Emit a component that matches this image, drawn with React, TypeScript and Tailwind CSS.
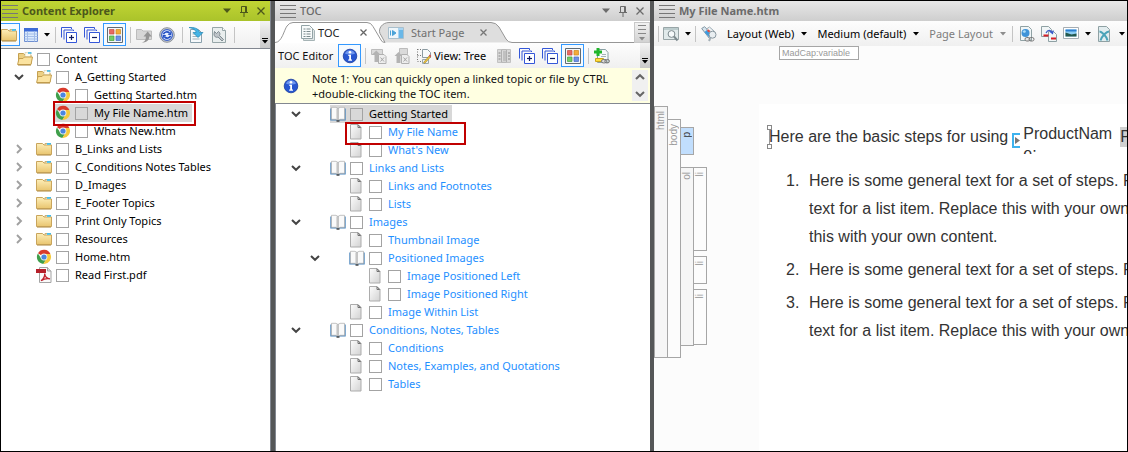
import React from "react";
import type { ReactNode } from "react";

/* ---------- Icons ---------- */

const Svg = ({ children, className = "h-4 w-4" }: { children: ReactNode; className?: string }) => (
  <svg viewBox="0 0 16 16" className={`${className} shrink-0`} aria-hidden="true">
    {children}
  </svg>
);

const FolderIcon = () => (
  <Svg>
    <defs>
      <linearGradient id="fold" x1="0" y1="0" x2="0" y2="1">
        <stop offset="0" stopColor="#fdeeb8" />
        <stop offset="1" stopColor="#e9c56f" />
      </linearGradient>
    </defs>
    <path d="M9 2.500h5.500V5H9z" fill="#fff" stroke="#c9b27a" />
    <path d="M11 2h4v1.200h-4z" fill="#38b6e8" />
    <path d="M.5 13.500v-11h6l1.500 1.500h7.500v9.500z" fill="url(#fold)" stroke="#c9a55c" />
    <path d="M11 2.500h3.500V4H11z" fill="#5cc4ea" />
    <path d="M1 14.200h14" stroke="#b48f45" strokeWidth=".8" />
  </Svg>
);

const OpenFolderIcon = () => (
  <Svg>
    <path d="M1.500 13V2.500h5L8 4h6v9z" fill="#ecd084" stroke="#c5a050" />
    <path d="M8 1.500l6 .4-.5 4H8z" fill="#fffdf0" stroke="#cfc29a" strokeWidth=".6" />
    <path d="M11 1.200h3.500v1.500H11z" fill="#38b6e8" />
    <path d="M.6 13.500L2 7.500h4L7.500 6h8l-1.500 7.500z" fill="#fbe3a0" stroke="#c5a050" />
    <path d="M1 14.200h13" stroke="#b48f45" strokeWidth=".8" />
  </Svg>
);

const ChromeIcon = () => (
  <Svg>
    <path d="M8 8L2 4.200A7 7 0 0 1 14.400 5H8z" fill="#d93a2b" />
    <path d="M1.900 4.400A7 7 0 0 0 7.400 15L10.600 9.700 8 8 5.300 9.600z" fill="#3f9f4b" />
    <path d="M14.300 5A7 7 0 0 1 7.300 15l3.400-5.600L10 5z" fill="#f5ca3d" />
    <circle cx="8" cy="8" r="3.400" fill="#f4f4f4" />
    <circle cx="8" cy="8" r="2.600" fill="#4a86e0" />
  </Svg>
);

const PdfIcon = () => (
  <Svg>
    <path d="M3.500.5h8l3.500 3.500v11.500h-11.500z" fill="#fafafa" stroke="#a4a4a4" />
    <path d="M11.500.5V4H15" fill="#ddd" stroke="#a4a4a4" />
    <path d="M0 2h10v4H0z" fill="#b5202a" />
    <path d="M5 13.800c3-2.300 4-4.500 3.700-7.300.3 3.400 2.100 5 5.300 5.300-3.500-.7-6 0-9 2z" fill="none" stroke="#c1222d" strokeWidth="1.300" />
  </Svg>
);

const BookIcon = () => (
  <Svg>
    <path d="M.3 2.500v12h6.200l1 .8h1l1-.8h6.200v-12z" fill="#4b86bd" />
    <path d="M1.500 1.300H6L8 2.500l2-1.200h4.500v12H10L8 14.500l-2-1.200H1.500z" fill="#fafafa" stroke="#b4b4b4" strokeWidth=".8" />
    <path d="M8 2.500V14" stroke="#8e8e8e" />
    <path d="M6.500 15h3" stroke="#333" strokeWidth="1.300" />
    <path d="M6.500 2.500v10.500" stroke="#dcdcdc" />
  </Svg>
);

const PageIcon = () => (
  <Svg>
    <defs>
      <linearGradient id="page" x1="0" y1="0" x2="1" y2="1">
        <stop offset="0" stopColor="#fdfdfd" />
        <stop offset="1" stopColor="#d2d2d2" />
      </linearGradient>
    </defs>
    <path d="M1.500 .5h7.500l3 3v11.500h-10.500z" fill="url(#page)" stroke="#acacac" />
    <path d="M9 .8v2.700h2.700z" fill="#eee" stroke="#707070" />
  </Svg>
);

const ChevronDown = ({ className = "text-[#444]" }: { className?: string }) => (
  <svg viewBox="0 0 10 8" className={`h-2 w-[10px] ${className}`} aria-hidden="true">
    <path d="M1 2l4 3.800L9 2" fill="none" stroke="currentColor" strokeWidth="2" />
  </svg>
);

const ChevronUp = () => (
  <svg viewBox="0 0 10 8" className="h-2 w-[10px] text-[#666]" aria-hidden="true">
    <path d="M1 6l4-3.800L9 6" fill="none" stroke="currentColor" strokeWidth="2.200" />
  </svg>
);

const ChevronRight = () => (
  <svg viewBox="0 0 10 10" className="h-[10px] w-[10px]" aria-hidden="true">
    <path d="M3 1l4 4-4 4" fill="none" stroke="#a0a0a0" strokeWidth="1.900" />
  </svg>
);

const Caret = ({ className = "text-black" }: { className?: string }) => (
  <svg viewBox="0 0 6 4" className={`h-1 w-[6px] shrink-0 ${className}`} aria-hidden="true">
    <path d="M0 0h6L3 3.500z" fill="currentColor" />
  </svg>
);

const StackIcon = ({ plus = false }: { plus?: boolean }) => (
  <Svg>
    <path d="M.5 10.500V.5h10v1.500" fill="none" stroke="#3457d8" />
    <path d="M3 12.500V3h9.500v1" fill="none" stroke="#3457d8" />
    <path d="M5.500 5.500h10v10h-10z" fill="#fff" stroke="#3457d8" />
    <path d="M8 10.500h5" stroke="#111b60" strokeWidth="1.200" />
    {plus && <path d="M10.500 8v5" stroke="#111b60" strokeWidth="1.200" />}
  </Svg>
);

const GridIcon = () => (
  <Svg>
    <path d="M.5.5h15v15H.5z" fill="#f4f7fa" stroke="#5f6b75" />
    <path d="M2.500 2.500H7V7H2.500z" fill="#e86a62" stroke="#c64a42" strokeWidth=".7" />
    <path d="M9 2.500h4.500V7H9z" fill="#f3ac3a" stroke="#d18a1e" strokeWidth=".7" />
    <path d="M2.500 9H7v4.500H2.500z" fill="#74cc66" stroke="#48a23c" strokeWidth=".7" />
    <path d="M9 9h4.500v4.500H9z" fill="#6f93e6" stroke="#476cc4" strokeWidth=".7" />
  </Svg>
);

const TableIcon = () => (
  <Svg>
    <path d="M1.500 1.500h13v13h-13z" fill="#dbeafc" stroke="#6f8fd0" />
    <path d="M1 1h14v3.500H1z" fill="#3d6bd6" />
    <path d="M1.500 7h13M1.500 9.500h13M1.500 12h13M4.500 4.500v10M11.500 4.500v10" stroke="#a3bdea" />
  </Svg>
);

const FolderUpIcon = () => (
  <Svg>
    <path d="M.5 12.500v-10h5L7 4h8.500v8.500z" fill="#d6d6d6" stroke="#bcbcbc" />
    <path d="M5.500 15.500c3.500-.5 4.500-3 4.300-6H7.500L11.700 4.500 15.800 9.500h-2.600c0 4-2.700 6-7.700 6z" fill="#949494" />
  </Svg>
);

const SyncIcon = () => (
  <Svg>
    <circle cx="8" cy="8" r="7.300" fill="#c5c9cf" stroke="#8d939b" />
    <circle cx="8" cy="8" r="5.400" fill="#e6efff" stroke="#3b62c9" strokeWidth="1.200" />
    <path d="M4.500 7.300C5.200 4.800 8.500 4.200 10.500 6M11.500 8.700c-.7 2.500-4 3.100-6 1.300" fill="none" stroke="#2450c4" strokeWidth="1.700" />
    <path d="M12.200 4.500v3.500H8.700zM3.800 11.500V8h3.500z" fill="#2450c4" />
  </Svg>
);

const DocArrowIcon = () => (
  <Svg>
    <path d="M2.500 2.500h8l3 3v10h-11z" fill="#f6f9fb" stroke="#8aa0ac" />
    <path d="M4.500 7h5M4.500 9.500h7M4.500 12h7" stroke="#a5b2bb" />
    <path d="M1 .5c5-.5 10 1 10.500 5h3.500l-5 5-5-5h3C8 3 5 1.500 1 .5z" fill="#44b4e6" stroke="#2185b4" strokeWidth=".7" />
  </Svg>
);

const DocWrenchIcon = () => (
  <Svg>
    <path d="M1.500.5h10l3 3v12h-13z" fill="#e9eeee" stroke="#97a6a8" />
    <path d="M11.500.5v3h3" fill="#fff" stroke="#97a6a8" />
    <path d="M3.500 4.500l2 2 2-2c1.500 1 1.800 2.500 1 4l4 4-1.500 1.500-4-4C5 11 3 9.500 3 7z" fill="#bfc5c9" stroke="#6c7880" strokeWidth=".8" />
  </Svg>
);

const InfoIcon = () => (
  <Svg>
    <circle cx="8" cy="8" r="6.800" fill="#2756d0" stroke="#1a3b9c" strokeWidth=".8" />
    <path d="M3 5.500a5.500 5.500 0 0 1 10 0C11 7 5 7 3 5.500z" fill="#6d95ee" />
    <circle cx="8" cy="4.300" r="1.300" fill="#fff" />
    <path d="M6.300 6.700H9v4.800h1v1.200H6.200v-1.200h1V8h-.9z" fill="#fff" />
  </Svg>
);

const GrayDocsIcon = ({ twin = false }: { twin?: boolean }) => (
  <Svg>
    <path d={twin ? "M5.500 .5h8v7h-8z" : "M.5 1.500h11v5h-11z"} fill="#dadada" stroke="#bcbcbc" />
    <path d={twin ? "M2.500 15V8H.5l4-4 4 4h-2v7z" : "M3.500 14V7H.8L5.300 2.500 9.800 7H7v7z"} fill="#b3b3b3" />
    <path d="M7.500 6.500h5.500l2 2v7H7.500z" fill="#ededed" stroke="#b0b0b0" />
    <path d="M9.500 9.500l3.500 4M13 9.500l-3.500 4" stroke="#a5a5a5" />
  </Svg>
);

const ViewIcon = () => (
  <Svg>
    <path d="M1.500 1v12M1.500 1.500H6M1.500 7.500H5M1.500 13.500H5" stroke="#777" strokeDasharray="1 1.500" />
    <path d="M6.500 1.500h5l3 3v5h-8z" fill="#f7fafb" stroke="#8c9ba2" />
    <path d="M6.500 11.500h6v4h-6z" fill="#eef2f4" stroke="#9aa8ae" />
    <path d="M7.500 14.500L13 8l1.300 1.300-5.500 6z" fill="#f0c63a" stroke="#8a6c1a" strokeWidth=".5" />
    <path d="M12.800 7.600l1-1 1.500 1.500-1 1z" fill="#d94444" />
  </Svg>
);

const ListIcon = () => (
  <Svg>
    <path d="M1.500 1.500h13v13h-13z" fill="#d9d9d9" stroke="#c2c2c2" />
    <path d="M5.500 2h5v12h-5z" fill="#f8f8f8" stroke="#b0b0b0" />
    <path d="M6.500 4h3.500M6.500 6h3.500M6.500 8h3.500M6.500 10h3.500M6.500 12h3.500M2.500 5h2M2.500 8h2M2.500 11h2M12 5h2M12 8h2M12 11h2" stroke="#888" />
  </Svg>
);

const DocPlusIcon = () => (
  <Svg>
    <path d="M3.500 1.500h8l2.500 3v10h-10.500z" fill="#f7fafa" stroke="#88a0a4" />
    <path d="M8 6.500h4M7 8.500h5" stroke="#a4b4b8" />
    <path d="M2.500 0h3v2.500H8v3H5.500V8h-3V5.500H0v-3h2.500z" fill="#20b52c" />
    <path d="M1.500 10.500h8v3h-8z" fill="#ffdf3d" stroke="#caa51d" />
    <rect x="7.500" y="11.500" width="5" height="3.400" rx="1.700" fill="#ddd" stroke="#777" />
    <rect x="10.800" y="11.500" width="4.600" height="3.400" rx="1.700" fill="none" stroke="#777" />
  </Svg>
);

const TocPageIcon = () => (
  <Svg>
    <path d="M3.500 2.500h8l3 3v10h-11z" fill="#dfe5e6" stroke="#a6b4b6" />
    <path d="M1.500.5h8l3 3v10h-11z" fill="#f8fbfb" stroke="#93a3a6" />
    <path d="M3.500 4h2M6.500 4h4M3.500 6.500h2M6.500 6.500h4M3.500 9h2M6.500 9h4M3.500 11.500h2M6.500 11.500h4" stroke="#7c8b8e" />
  </Svg>
);

const StartPageIcon = () => (
  <Svg>
    <path d="M.5 2.500h15v11H.5z" fill="#a8d4f2" stroke="#a9bfcc" />
    <path d="M1 3h9v10H1z" fill="#eef6fb" />
    <path d="M2.500 5.500v5M4.500 5.500v5L8 8z" fill="#49a2d8" stroke="#49a2d8" />
    <path d="M11 5h4v8h-4z" fill="#6ab8e8" />
  </Svg>
);

const PreviewIcon = () => (
  <Svg>
    <path d="M.5 1.500h15v12H.5z" fill="#e1eaeb" stroke="#98a5a7" />
    <path d="M1 2h14v2H1z" fill="#bccccd" />
    <circle cx="8.500" cy="8" r="3.400" fill="#f6fafb" stroke="#7c898d" />
    <path d="M11 10.500l3.500 4" stroke="#7c898d" strokeWidth="1.900" />
  </Svg>
);

const TagsIcon = () => (
  <Svg>
    <path d="M.7 2.500L3.500 .7 12 9 8.500 12.500z" fill="#d6e4ee" stroke="#8195a2" />
    <path d="M5.500 3l3-2 5 4.500-3 3z" fill="#eef3f5" stroke="#9cacb5" />
    <path d="M3.500 6l2.500-2 4 4.500L8 11z" fill="#3c9be0" />
    <path d="M7 3.200l2.500 1.800-1.500 1.500L6 5z" fill="#e34b42" />
    <circle cx="11.500" cy="8.700" r="3.500" fill="#e9eef1" stroke="#8997a0" />
    <path d="M9.500 11.500L8 15" stroke="#a3afb6" strokeWidth="2" />
  </Svg>
);

const DocGlobeIcon = () => (
  <Svg>
    <path d="M1.500.5h8l3 3v11h-11z" fill="#f1f6f7" stroke="#8fa1a4" />
    <circle cx="6.500" cy="7" r="4" fill="#3e93d8" />
    <path d="M3.500 5.500c2-2.500 4-1 3.200.5-.8 1.500-2.400.8-3.200-.5z" fill="#aadcf8" />
    <rect x="6" y="11.500" width="5" height="3.500" rx="1.700" fill="#e5e5e5" stroke="#777" />
    <rect x="10" y="11.500" width="5" height="3.500" rx="1.700" fill="none" stroke="#777" />
  </Svg>
);

const DocSwapIcon = () => (
  <Svg>
    <path d="M.5.500h7l3 3v7H.5z" fill="#f1f6f7" stroke="#8fa1a4" />
    <path d="M7.500 5.500h5l3 3v7h-8z" fill="#f1f6f7" stroke="#8fa1a4" />
    <path d="M2.500 9.500h5M10 12.500h5" stroke="#d81f26" strokeWidth="2" />
    <path d="M5 7c2-4 5-3 6-.5M9 5.500l2.500 2 .8-3" fill="none" stroke="#3859ca" strokeWidth="1.200" />
  </Svg>
);

const PictureIcon = () => (
  <Svg>
    <path d="M.5 1.500h15v11H.5z" fill="#fff" stroke="#a5adb3" />
    <path d="M2.500 3.500h11v7h-11z" fill="#8ccdf3" />
    <path d="M2.500 3.500h11v2h-11z" fill="#2a7ed0" />
    <path d="M2.500 6.500l6 2 5-1v3h-11z" fill="#24584d" />
  </Svg>
);

const DocCutIcon = () => (
  <Svg>
    <path d="M1.500.5h8l3 3v12h-11z" fill="#e3edef" stroke="#8fa1a4" />
    <path d="M2.500 5.500c2 0 7 4.500 8 9M12 5.500c-2.500 0-7 4.500-8.500 9" fill="none" stroke="#4ba3b8" strokeWidth="2" />
  </Svg>
);

/* ---------- Shared chrome ---------- */

const Grip = () => (
  <span className="flex w-4 shrink-0 flex-col gap-[3px] text-[#777]" aria-hidden="true">
    <span className="h-px bg-current" />
    <span className="h-px bg-current" />
    <span className="h-px bg-current" />
    <span className="h-px bg-current" />
  </span>
);

const PanelButtons = () => (
  <div className="ml-auto flex items-center gap-[7px]">
    <button aria-label="Window options" className="flex h-4 w-[10px] items-center">
      <svg viewBox="0 0 10 6" className="h-[6px] w-[10px]"><path d="M1 .5h8L5 5z" fill="currentColor" /></svg>
    </button>
    <button aria-label="Pin" className="flex h-4 w-[10px] items-center">
      <svg viewBox="0 0 10 12" className="h-3 w-[10px]">
        <path d="M2.500 7V1.500h5V7M6.500 2v5M1 7.500h8M5 8v4" fill="none" stroke="currentColor" />
      </svg>
    </button>
    <button aria-label="Close" className="flex h-4 w-[10px] items-center">
      <svg viewBox="0 0 10 10" className="h-[10px] w-[10px]">
        <path d="M1.500 1.500l7 7M8.500 1.500l-7 7" stroke="currentColor" strokeWidth="1.300" />
      </svg>
    </button>
  </div>
);

const TitleBar = ({ title, green, bold, buttons = true }: { title: string; green?: boolean; bold?: boolean; buttons?: boolean }) => (
  <header
    className={`flex h-5 shrink-0 items-center ${
      green
        ? "gap-1 bg-linear-to-b from-[#c1d534] to-[#aac32a] pl-px pr-1 text-[#4c571b]"
        : "gap-1 bg-linear-to-b from-[#e8e8e8] to-[#cecece] pl-[5px] pr-[5px] text-[#6b6b6b]"
    }`}
  >
    <Grip />
    <h2 className={`whitespace-nowrap leading-5 ${bold ? "font-bold" : "font-medium"}`}>{title}</h2>
    {buttons && <PanelButtons />}
  </header>
);

const Sep = () => <span className="ml-1 mr-px h-4 w-px shrink-0 bg-[#c4c4c4]" />;

const Tool = ({ label, active, children }: { label: string; active?: boolean; children: ReactNode }) => (
  <button
    aria-label={label}
    title={label}
    className={`flex h-[23px] w-[23px] shrink-0 items-center justify-center ${active ? "border border-[#3399ff] bg-[#f5faff]" : ""}`}
  >
    {children}
  </button>
);

const Overflow = () => (
  <button aria-label="More tools" className="ml-auto flex h-full w-[10px] shrink-0 flex-col items-center justify-end gap-px bg-linear-to-b from-[#f4f4f4] to-[#c9c9c9] pb-1">
    <span className="h-px w-[6px] bg-black" />
    <Caret />
  </button>
);

/* ---------- Tree ---------- */

type Kind = "open" | "folder" | "chrome" | "pdf" | "book" | "page";
type Row = {
  text: string;
  kind: Kind;
  level: number;
  arrow?: "down" | "right";
  selected?: boolean;
  frame?: string;
};

const icons: Record<Kind, ReactNode> = {
  open: <OpenFolderIcon />,
  folder: <FolderIcon />,
  chrome: <ChromeIcon />,
  pdf: <PdfIcon />,
  book: <BookIcon />,
  page: <PageIcon />,
};

const Tree = ({ rows, slots, arrowPad, color, name }: { rows: Row[]; slots: string[]; arrowPad: string; color: string; name: string }) => (
  <ul role="tree" aria-label={name}>
    {rows.map((row) => (
      <li key={row.text} role="treeitem" aria-selected={!!row.selected} className="flex h-[18px] items-center">
        <span className={`flex shrink-0 justify-end ${arrowPad} ${slots[row.level]}`}>
          {row.arrow && (
            <button aria-label={row.arrow === "down" ? `Collapse ${row.text}` : `Expand ${row.text}`}>
              {row.arrow === "down" ? <ChevronDown /> : <ChevronRight />}
            </button>
          )}
        </span>
        <label className={`relative flex h-[18px] items-center gap-1 pr-1 ${row.selected ? "bg-[#d8d8d8] text-black" : color}`}>
          {icons[row.kind]}
          <input type="checkbox" className="h-[13px] w-[13px] shrink-0 appearance-none border border-[#a3a3a3] bg-transparent checked:bg-[#666]" />
          <span className="ml-[2px] whitespace-nowrap">{row.text}</span>
          {row.frame && <span className={`pointer-events-none absolute z-10 border-2 border-[#c00000] ${row.frame}`} />}
        </label>
      </li>
    ))}
  </ul>
);

const contentRows: Row[] = [
  { text: "Content", kind: "open", level: 0 },
  { text: "A_Getting Started", kind: "open", level: 1, arrow: "down" },
  { text: "Getting Started.htm", kind: "chrome", level: 2 },
  { text: "My File Name.htm", kind: "chrome", level: 2, selected: true, frame: "-top-[3px] -bottom-1 -left-[2px] -right-1" },
  { text: "Whats New.htm", kind: "chrome", level: 2 },
  { text: "B_Links and Lists", kind: "folder", level: 1, arrow: "right" },
  { text: "C_Conditions Notes Tables", kind: "folder", level: 1, arrow: "right" },
  { text: "D_Images", kind: "folder", level: 1, arrow: "right" },
  { text: "E_Footer Topics", kind: "folder", level: 1, arrow: "right" },
  { text: "Print Only Topics", kind: "folder", level: 1, arrow: "right" },
  { text: "Resources", kind: "folder", level: 1, arrow: "right" },
  { text: "Home.htm", kind: "chrome", level: 1 },
  { text: "Read First.pdf", kind: "pdf", level: 1 },
];

const tocRows: Row[] = [
  { text: "Getting Started", kind: "book", level: 0, arrow: "down", selected: true },
  { text: "My File Name", kind: "page", level: 1, frame: "-top-px -bottom-1 -left-1 -right-1" },
  { text: "What's New", kind: "page", level: 1 },
  { text: "Links and Lists", kind: "book", level: 0, arrow: "down" },
  { text: "Links and Footnotes", kind: "page", level: 1 },
  { text: "Lists", kind: "page", level: 1 },
  { text: "Images", kind: "book", level: 0, arrow: "down" },
  { text: "Thumbnail Image", kind: "page", level: 1 },
  { text: "Positioned Images", kind: "book", level: 1, arrow: "down" },
  { text: "Image Positioned Left", kind: "page", level: 2 },
  { text: "Image Positioned Right", kind: "page", level: 2 },
  { text: "Image Within List", kind: "page", level: 1 },
  { text: "Conditions, Notes, Tables", kind: "book", level: 0, arrow: "down" },
  { text: "Conditions", kind: "page", level: 1 },
  { text: "Notes, Examples, and Quotations", kind: "page", level: 1 },
  { text: "Tables", kind: "page", level: 1 },
];

/* ---------- Panels ---------- */

const ContentExplorer = () => (
  <section className="flex w-[270px] shrink-0 flex-col border-r border-[#828790] bg-white">
    <TitleBar title="Content Explorer" green bold />
    <div className="flex h-[27px] shrink-0 items-center bg-linear-to-b from-[#fdfdfd] to-[#f0f0f0]">
      <button aria-label="Show folders" className="flex h-[23px] w-[19px] shrink-0 items-center border border-l-0 border-[#3399ff] bg-[#f5faff]">
        <FolderIcon />
      </button>
      <button aria-label="View options" className="flex h-[23px] w-[31px] shrink-0 items-center justify-end gap-[5px] pr-px">
        <TableIcon />
        <Caret />
      </button>
      <Sep />
      <Tool label="Expand all"><StackIcon plus /></Tool>
      <Tool label="Collapse all"><StackIcon /></Tool>
      <Tool label="Show indicators" active><GridIcon /></Tool>
      <Sep />
      <Tool label="Up one level"><FolderUpIcon /></Tool>
      <Tool label="Refresh"><SyncIcon /></Tool>
      <Sep />
      <Tool label="Open"><DocArrowIcon /></Tool>
      <Tool label="Properties"><DocWrenchIcon /></Tool>
      <Sep />
      <Overflow />
    </div>
    <div className="grow border-t border-[#828790] pt-px">
      <Tree name="Content Explorer" rows={contentRows} slots={["w-4", "w-[35px]", "w-[54px]"]} arrowPad="pr-3" color="text-black" />
    </div>
  </section>
);

const Tabs = () => (
  <div className="flex h-[22px] shrink-0 items-end bg-white pt-px" role="tablist">
    <button role="tab" aria-selected="true" className="relative flex h-[21px] w-[110px] shrink-0 items-center pl-[25px] pr-[18px] text-[#222]">
      <svg viewBox="0 0 110 21" className="absolute inset-0 h-full w-full" aria-hidden="true">
        <path d="M0 20.500C7 20.500 9 8 12 4Q14.500.5 18 .5H92Q96 .5 98 4.500L106 18Q107 20.500 110 20.500" fill="#fff" stroke="#969696" />
      </svg>
      <span className="relative flex items-center"><TocPageIcon /></span>
      <span className="relative ml-[2px]">TOC</span>
      <svg viewBox="0 0 7 7" className="relative ml-auto h-[7px] w-[7px]"><path d="M.5.5l6 6M6.500.5l-6 6" stroke="#666" strokeWidth="1.300" /></svg>
    </button>
    <button role="tab" aria-selected="false" className="relative flex h-[21px] w-[127px] shrink-0 items-center pl-[3px] pr-[25px] text-[#6f6f6f]">
      <svg viewBox="-7 0 134 21" className="absolute -left-[7px] top-0 h-full w-[134px]" aria-hidden="true">
        <path d="M0 20.500L-5 11.500C-7 7-3 .5 4 .5H106Q111 .5 114 5L121 17Q123 20.500 127 20.500" fill="#dedede" stroke="#969696" />
      </svg>
      <span className="relative flex items-center"><StartPageIcon /></span>
      <span className="relative ml-[7px]">Start Page</span>
      <svg viewBox="0 0 7 7" className="relative ml-auto h-[7px] w-[7px]"><path d="M.5.5l6 6M6.500.5l-6 6" stroke="#777" strokeWidth="1.300" /></svg>
    </button>
    <span className="h-full grow border-b border-[#969696]" />
    <button aria-label="Tab list" className="flex h-[21px] w-4 shrink-0 flex-col items-center justify-center gap-[3px] border border-[#c8c8c8] bg-linear-to-b from-[#f2f2f2] to-[#d2d2d2] text-[#888]">
      <span className="h-px w-2 bg-current" />
      <span className="h-px w-2 bg-current" />
      <span className="h-px w-2 bg-current" />
      <Caret className="text-[#888]" />
    </button>
  </div>
);

const TocPanel = () => (
  <section className="flex w-[375px] shrink-0 flex-col bg-white">
    <TitleBar title="TOC" />
    <Tabs />
    <div className="flex h-[25px] shrink-0 items-center bg-linear-to-b from-[#fdfdfd] to-[#f0f0f0]">
      <span className="w-[63px] shrink-0 whitespace-nowrap pl-[3px] text-[#111]">TOC Editor</span>
      <Tool label="Show notes" active><InfoIcon /></Tool>
      <Sep />
      <Tool label="Move up"><GrayDocsIcon /></Tool>
      <Tool label="Move all up"><GrayDocsIcon twin /></Tool>
      <button className="flex w-[79px] shrink-0 items-center gap-[2px] whitespace-nowrap pl-[3px]"><ViewIcon />View: Tree</button>
      <Tool label="Columns"><ListIcon /></Tool>
      <Tool label="Expand all"><StackIcon plus /></Tool>
      <Tool label="Collapse all"><StackIcon /></Tool>
      <Tool label="Show indicators" active><GridIcon /></Tool>
      <Sep />
      <Tool label="New linked topic"><DocPlusIcon /></Tool>
      <Overflow />
    </div>
    <div className="flex h-[35px] shrink-0 items-center bg-[#ffffe1] pl-2 pr-[2px]">
      <InfoIcon />
      <p className="ml-[13px] grow whitespace-nowrap leading-[15px] text-[#111]">
        Note 1: You can quickly open a linked topic or file by CTRL
        <br />
        +double-clicking the TOC item.
      </p>
      <div className="flex h-[31px] w-4 shrink-0 flex-col items-center justify-between bg-[#f0f0f0] py-[3px]">
        <button aria-label="Scroll up" className="flex"><ChevronUp /></button>
        <button aria-label="Scroll down" className="flex"><ChevronDown className="text-[#666]" /></button>
      </div>
    </div>
    <div className="grow border-l border-t border-[#828790] pt-px">
      <Tree name="Table of contents" rows={tocRows} slots={["w-[54px]", "w-[73px]", "w-[92px]"]} arrowPad="pr-[29px]" color="text-[#1e8fff]" />
    </div>
  </section>
);

const Drop = ({ label, muted }: { label: string; muted?: boolean }) => (
  <button className={`flex shrink-0 items-center gap-[7px] whitespace-nowrap ${muted ? "text-[#7d7d7d]" : "text-black"}`}>
    {label}
    <Caret className={muted ? "text-[#8d8d8d]" : "text-black"} />
  </button>
);

const Tag = ({ children }: { children: string }) => (
  <span className="self-start rotate-180 [writing-mode:vertical-rl]">{children}</span>
);

const bar = "flex w-[14px] justify-center border border-[#a6a6a6] pt-1";

const StructureBars = () => (
  <div className="flex items-start pt-[46px] font-['Liberation_Sans',sans-serif] text-[10px] leading-3 text-[#9a9a9a]">
    <div className={`${bar} h-[252px] bg-[#f6f6f6]`}><Tag>html</Tag></div>
    <div className={`${bar} -ml-px mt-[13px] h-[239px] bg-[#fcfcfc]`}><Tag>body</Tag></div>
    <div className="-ml-px mt-[21px]">
      <div className={`${bar} h-7 bg-[#c1defd] text-[#333]`}><Tag>p</Tag></div>
      <div className="mt-3 flex">
        <div className={`${bar} h-[179px] bg-[#f6f6f6]`}><Tag>ol</Tag></div>
        <div className="-ml-px flex flex-col gap-[5px]">
          <div className={`${bar} h-[84px] bg-[#fcfcfc]`}><Tag>li</Tag></div>
          <div className={`${bar} h-7 bg-[#fcfcfc]`}><Tag>li</Tag></div>
          <div className={`${bar} h-14 bg-[#fcfcfc]`}><Tag>li</Tag></div>
        </div>
      </div>
    </div>
  </div>
);

const Step = ({ n, lines }: { n: number; lines: string[] }) => (
  <li className="flex gap-[9px]">
    <span className="w-[14px] shrink-0">{n}.</span>
    <span>
      {lines.map((line) => (
        <span key={line} className="block">{line}</span>
      ))}
    </span>
  </li>
);

const Editor = () => (
  <section className="flex min-w-0 grow flex-col overflow-hidden bg-[#fcfcfc]">
    <TitleBar title="My File Name.htm" bold buttons={false} />
    <div className="flex h-[25px] shrink-0 items-center bg-linear-to-b from-[#fdfdfd] to-[#f0f0f0]">
      <Sep />
      <button aria-label="Preview" className="ml-[3px] flex items-center gap-[6px]"><PreviewIcon /><Caret /></button>
      <Sep />
      <div className="ml-1 mr-[2px] flex shrink-0 items-center gap-[10px]">
        <button aria-label="Tags"><TagsIcon /></button>
        <Drop label="Layout (Web)" />
        <Drop label="Medium (default)" />
        <Drop label="Page Layout" muted />
      </div>
      <Sep />
      <div className="ml-[5px] flex items-center gap-[6px]">
        <button aria-label="Hyperlink"><DocGlobeIcon /></button>
        <button aria-label="Cross reference"><DocSwapIcon /></button>
        <button aria-label="Picture" className="flex items-center gap-[6px]"><PictureIcon /><Caret /></button>
        <button aria-label="Snippet" className="flex items-center gap-[6px]"><DocCutIcon /><Caret /></button>
      </div>
    </div>
    <div className="flex grow">
      <div className="w-[105px] shrink-0 pt-[14px]">
        <StructureBars />
      </div>
      <div className="flex min-w-0 grow flex-col">
        <div className="h-[58px] shrink-0 pl-5">
          <span className="inline-block h-[14px] border border-[#a6a6a6] bg-white pl-[2px] pr-2 align-top font-['Liberation_Sans',sans-serif] text-[9px] leading-3 text-[#9a9a9a]">
            MadCap:variable
          </span>
        </div>
        <article className="grow overflow-hidden whitespace-nowrap bg-white pl-[10px] pt-[19px] font-['Liberation_Sans',sans-serif] text-[16px] leading-7 text-[#333]">
          <p className="flex h-7 items-center">
            <span className="relative">
              <span className="absolute left-0 top-[2px] bottom-[2px] border-l border-[#999]">
                <span className="absolute -left-[3px] top-0 h-[5px] w-[5px] border border-[#888] bg-white" />
                <span className="absolute bottom-0 -left-[3px] h-[5px] w-[5px] border border-[#888] bg-white" />
              </span>
              Here are the basic steps for using
            </span>
            <svg viewBox="0 0 8 16" className="ml-1 mt-2 h-4 w-2 shrink-0" aria-hidden="true">
              <path d="M8 1H1v13h7" fill="none" stroke="#3db2ee" strokeWidth="2" />
              <path d="M3 4v7l5-3.500z" fill="#777" />
            </svg>
            <span className="ml-[3px] mt-1 block h-[30px] w-[93px] shrink-0 overflow-hidden leading-5">
              ProductNam
              <br />
              e:
            </span>
            <span className="ml-1 h-5 bg-[#d0d0d0] leading-5">P</span>
          </p>
          <ol className="flex flex-col gap-[5px] pl-[17px] pt-4">
            <Step n={1} lines={["Here is some general text for a set of steps. R", "text for a list item. Replace this with your own", "this with your own content."]} />
            <Step n={2} lines={["Here is some general text for a set of steps. R"]} />
            <Step n={3} lines={["Here is some general text for a set of steps. R", "text for a list item. Replace this with your own"]} />
          </ol>
        </article>
      </div>
    </div>
  </section>
);

export default function App() {
  return (
    <main className="flex min-h-screen gap-1 overflow-hidden border border-black bg-[#555758] font-['Noto_Sans',sans-serif] text-[11px] leading-[18px]">
      <ContentExplorer />
      <TocPanel />
      <Editor />
    </main>
  );
}
